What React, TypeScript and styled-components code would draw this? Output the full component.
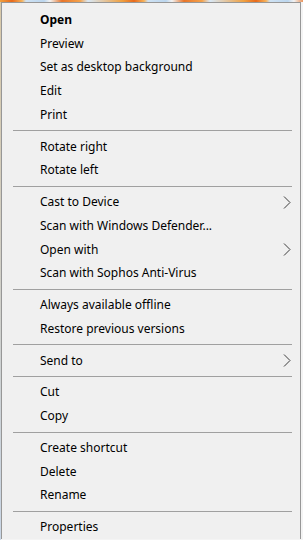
import styled, { createGlobalStyle } from "styled-components";

type Entry =
  | { kind: "item"; label: string; bold?: boolean; submenu?: boolean }
  | { kind: "sep" };

const entries: Entry[] = [
  { kind: "item", label: "Open", bold: true },
  { kind: "item", label: "Preview" },
  { kind: "item", label: "Set as desktop background" },
  { kind: "item", label: "Edit" },
  { kind: "item", label: "Print" },
  { kind: "sep" },
  { kind: "item", label: "Rotate right" },
  { kind: "item", label: "Rotate left" },
  { kind: "sep" },
  { kind: "item", label: "Cast to Device", submenu: true },
  { kind: "item", label: "Scan with Windows Defender..." },
  { kind: "item", label: "Open with", submenu: true },
  { kind: "item", label: "Scan with Sophos Anti-Virus" },
  { kind: "sep" },
  { kind: "item", label: "Always available offline" },
  { kind: "item", label: "Restore previous versions" },
  { kind: "sep" },
  { kind: "item", label: "Send to", submenu: true },
  { kind: "sep" },
  { kind: "item", label: "Cut" },
  { kind: "item", label: "Copy" },
  { kind: "sep" },
  { kind: "item", label: "Create shortcut" },
  { kind: "item", label: "Delete" },
  { kind: "item", label: "Rename" },
  { kind: "sep" },
  { kind: "item", label: "Properties" },
];

const Chevron = () => (
  <svg width="8" height="13" viewBox="0 0 8 13">
    <polyline
      points="1,0.5 7,6.5 1,12.5"
      fill="none"
      stroke="#3c3c3c"
      strokeWidth="1"
    />
  </svg>
);

const App = () => {
  return (
    <>
      <GlobalStyle />
      <Desktop>
        <Menu>
          {entries.map((entry, i) =>
            entry.kind === "sep" ? (
              <Separator key={i} />
            ) : (
              <Item key={i} $bold={entry.bold}>
                <Label>{entry.label}</Label>
                {entry.submenu && (
                  <Arrow>
                    <Chevron />
                  </Arrow>
                )}
              </Item>
            )
          )}
        </Menu>
      </Desktop>
    </>
  );
};

const GlobalStyle = createGlobalStyle`
  html, body {
    margin: 0;
    padding: 0;
    overflow: hidden;
    background: #f3f3f3;
  }
`;

const Desktop = styled.div`
  height: 540px;
  overflow: hidden;
  padding: 2px 2px 0 1px;
  box-sizing: border-box;
  background:
    repeating-linear-gradient(
      90deg,
      #f0a040 0px,
      #e86a1c 12px,
      #f6b25a 22px,
      #cfe2f3 26px,
      #bcd6ee 44px,
      #f2f2f2 50px,
      #e8752a 62px,
      #f4a24c 80px,
      #d8e8f6 88px,
      #f0a040 122px
    ) top left / 100% 2px no-repeat,
    linear-gradient(#d9c9a8, #c9d6e6) left top / 1px 100% no-repeat,
    #f4f4f4;
`;

const Menu = styled.div`
  width: 300px;
  box-sizing: border-box;
  background: #f0f0f0;
  border: 1px solid #979797;
  border-bottom: none;
  padding: 5px 0 0 0;
  font-family: "Segoe UI", "Noto Sans", "Open Sans", sans-serif;
  font-size: 12px;
  color: #000;
`;

const Item = styled.div<{ $bold?: boolean }>`
  height: 23.75px;
  display: flex;
  align-items: center;
  padding: 0 9px 0 38px;
  font-weight: ${(p) => (p.$bold ? 700 : 400)};
`;

const Label = styled.span`
  flex: 1;
  white-space: nowrap;
  line-height: 1;
`;

const Arrow = styled.span`
  display: flex;
  align-items: center;
`;

const Separator = styled.div`
  height: 8px;
  display: flex;
  align-items: center;
  padding: 0 8px 0 11px;

  &::after {
    content: "";
    flex: 1;
    height: 1px;
    background: #a0a0a0;
  }
`;

export default App;
